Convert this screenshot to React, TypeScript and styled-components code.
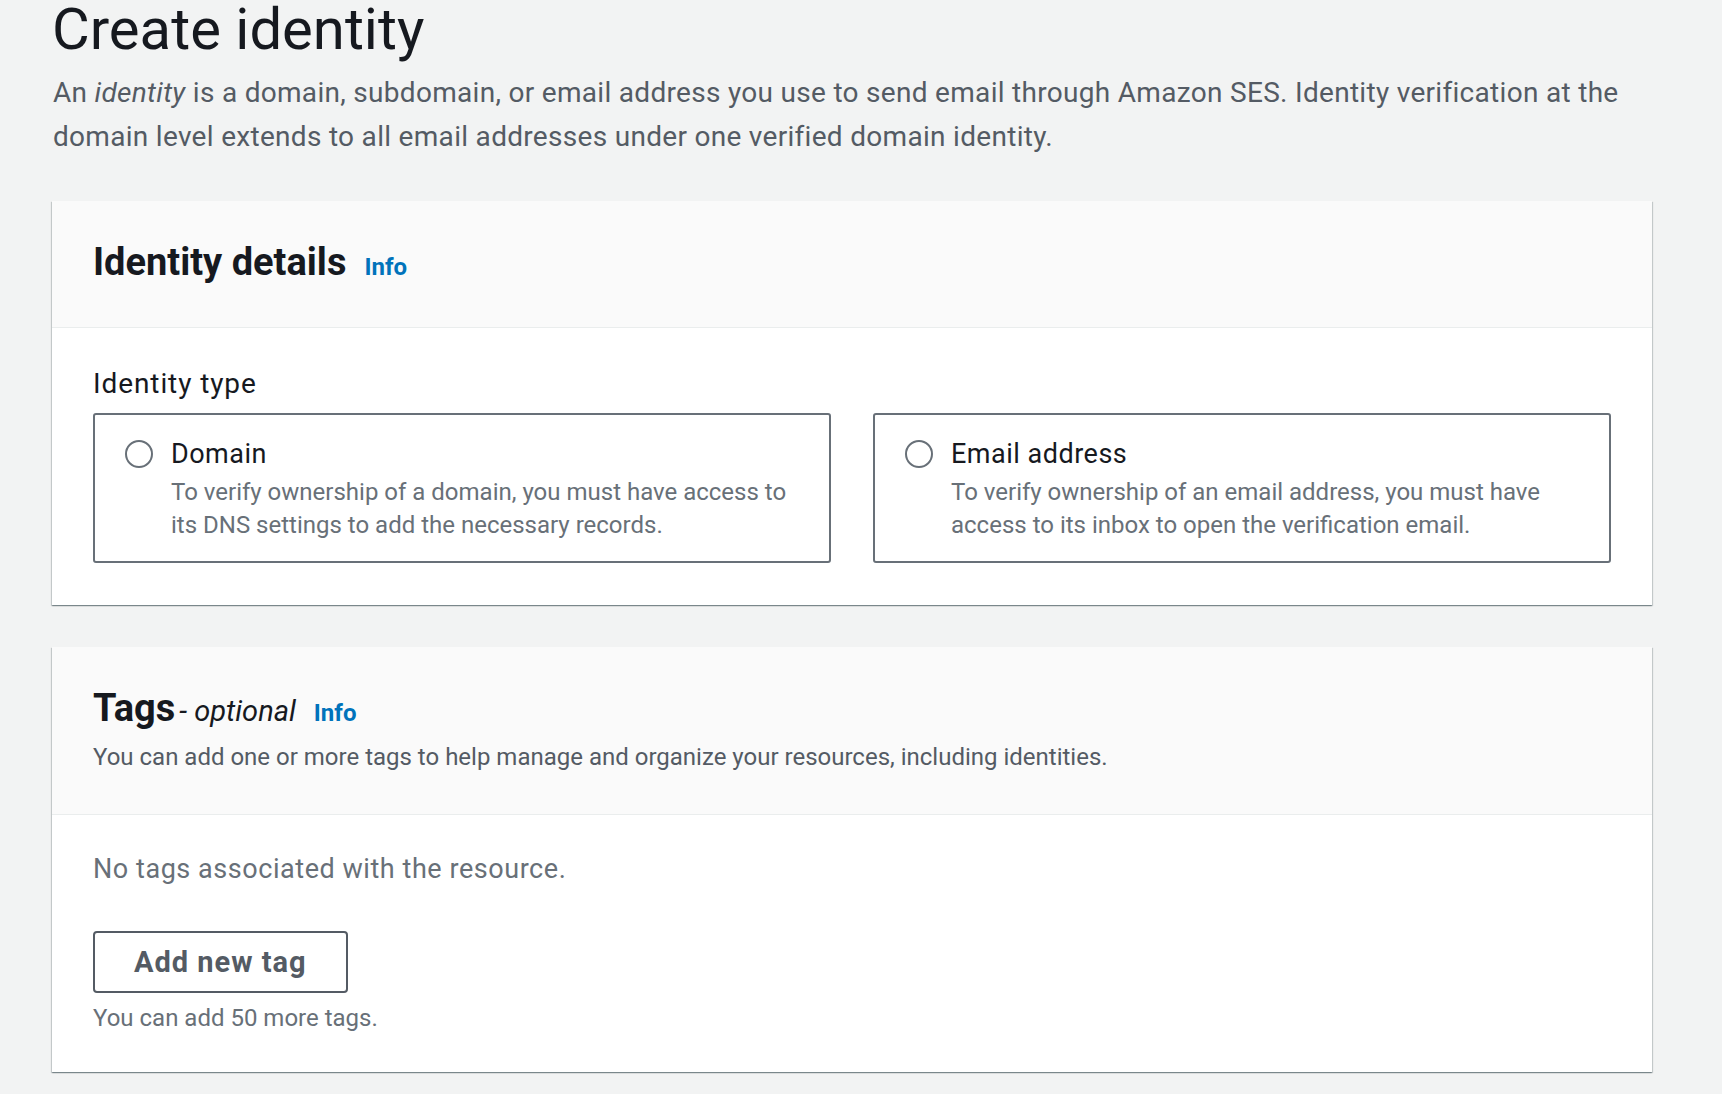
import styled, { createGlobalStyle } from "styled-components";

const GlobalStyle = createGlobalStyle`
  body {
    margin: 0;
    background-color: #f2f3f3;
    font-family: Roboto, "Open Sans", sans-serif;
    color: #16191f;
  }
`;

const Page = styled.main`
  padding: 0 70px 40px 52px;
`;

const PageTitle = styled.h1`
  margin: 0;
  font-size: 58px;
  line-height: 58px;
  font-weight: 400;
  color: #16191f;
`;

const PageDescription = styled.p`
  margin: 13px 0 0 1px;
  max-width: 1600px;
  font-size: 28px;
  line-height: 44px;
  letter-spacing: 0.3px;
  color: #545b64;
`;

const Container = styled.section<{ $top: number }>`
  margin-top: ${(props) => props.$top}px;
  background-color: #ffffff;
  box-shadow: 0 1px 1px 0 rgba(0, 28, 36, 0.3), 1px 1px 1px 0 rgba(0, 28, 36, 0.15),
    -1px 1px 1px 0 rgba(0, 28, 36, 0.15);
`;

const ContainerHeader = styled.header<{ $padBottom: number }>`
  background-color: #fafafa;
  border-bottom: 1px solid #eaeded;
  padding: 37px 41px ${(props) => props.$padBottom}px 41px;
`;

const HeadingRow = styled.div`
  display: flex;
  align-items: baseline;
  height: 48px;
`;

const Heading = styled.h2`
  margin: 0;
  font-size: 38px;
  line-height: 48px;
  font-weight: 700;
  color: #16191f;
`;

const Optional = styled.span`
  margin-left: 4px;
  font-size: 29px;
  font-style: italic;
  color: #16191f;
`;

const InfoLink = styled.a`
  margin-left: 18px;
  font-size: 24px;
  font-weight: 700;
  color: #0073bb;
  text-decoration: none;
  cursor: pointer;
`;

const HeaderDescription = styled.p`
  margin: 9px 0 0;
  font-size: 24px;
  line-height: 33px;
  color: #545b64;
`;

const ContainerBody = styled.div<{ $padTop: number; $padBottom: number }>`
  padding: ${(props) => props.$padTop}px 41px ${(props) => props.$padBottom}px;
`;

const FieldLabel = styled.div`
  font-size: 28px;
  line-height: 36px;
  letter-spacing: 0.9px;
  color: #16191f;
`;

const Tiles = styled.div`
  margin-top: 11px;
  display: grid;
  grid-template-columns: 1fr 1fr;
  gap: 42px;
`;

const Tile = styled.label`
  box-sizing: border-box;
  height: 150px;
  display: flex;
  gap: 18px;
  padding: 21px 30px 10px;
  border: 2px solid #687078;
  border-radius: 3px;
  cursor: pointer;
`;

const RadioCircle = styled.span`
  flex: none;
  box-sizing: border-box;
  width: 28px;
  height: 28px;
  margin-top: 4px;
  border: 2px solid #687078;
  border-radius: 50%;
  background-color: #ffffff;
`;

const TileText = styled.div`
  display: flex;
  flex-direction: column;
`;

const TileTitle = styled.span`
  font-size: 27px;
  line-height: 36px;
  letter-spacing: 0.5px;
  color: #16191f;
`;

const TileDescription = styled.span`
  margin-top: 4px;
  font-size: 24px;
  line-height: 33px;
  color: #687078;
`;

const EmptyText = styled.div`
  font-size: 27px;
  line-height: 36px;
  letter-spacing: 0.55px;
  color: #687078;
`;

const SecondaryButton = styled.button`
  margin-top: 44px;
  box-sizing: border-box;
  height: 62px;
  padding: 0 39px;
  border: 2px solid #545b64;
  border-radius: 4px;
  background-color: #ffffff;
  font-family: inherit;
  font-size: 29px;
  font-weight: 700;
  letter-spacing: 1px;
  color: #545b64;
  cursor: pointer;
`;

const Hint = styled.div`
  margin-top: 9px;
  font-size: 24px;
  line-height: 33px;
  color: #687078;
`;

const identityTypes = [
  {
    title: "Domain",
    description:
      "To verify ownership of a domain, you must have access to its DNS settings to add the necessary records.",
  },
  {
    title: "Email address",
    description:
      "To verify ownership of an email address, you must have access to its inbox to open the verification email.",
  },
];

const App = () => {
  return (
    <>
      <GlobalStyle />
      <Page>
        <PageTitle>Create identity</PageTitle>
        <PageDescription>
          An <i>identity</i> is a domain, subdomain, or email address you use to
          send email through Amazon SES. Identity verification at the domain
          level extends to all email addresses under one verified domain
          identity.
        </PageDescription>

        <Container $top={42}>
          <ContainerHeader $padBottom={41}>
            <HeadingRow>
              <Heading>Identity details</Heading>
              <InfoLink>Info</InfoLink>
            </HeadingRow>
          </ContainerHeader>
          <ContainerBody $padTop={38} $padBottom={42}>
            <FieldLabel>Identity type</FieldLabel>
            <Tiles>
              {identityTypes.map((type) => (
                <Tile key={type.title}>
                  <RadioCircle />
                  <TileText>
                    <TileTitle>{type.title}</TileTitle>
                    <TileDescription>{type.description}</TileDescription>
                  </TileText>
                </Tile>
              ))}
            </Tiles>
          </ContainerBody>
        </Container>

        <Container $top={42}>
          <ContainerHeader $padBottom={40}>
            <HeadingRow>
              <Heading>Tags</Heading>
              <Optional>- optional</Optional>
              <InfoLink>Info</InfoLink>
            </HeadingRow>
            <HeaderDescription>
              You can add one or more tags to help manage and organize your
              resources, including identities.
            </HeaderDescription>
          </ContainerHeader>
          <ContainerBody $padTop={36} $padBottom={37}>
            <EmptyText>No tags associated with the resource.</EmptyText>
            <SecondaryButton>Add new tag</SecondaryButton>
            <Hint>You can add 50 more tags.</Hint>
          </ContainerBody>
        </Container>
      </Page>
    </>
  );
};

export default App;
